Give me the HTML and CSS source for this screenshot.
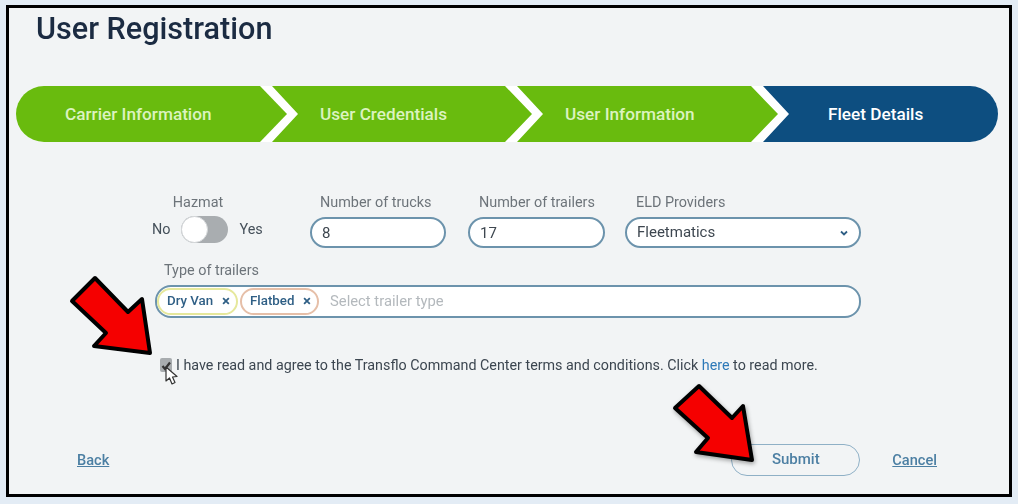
FILE: index.html
```html
<!DOCTYPE html>
<html lang="en">
<head>
  <meta charset="UTF-8" />
  <title>User Registration</title>
  <link rel="stylesheet" href="styles.css">
</head>
<body>
  <div class="frame">
    <h1 class="title">User Registration</h1>

    <!-- Steps -->
    <div class="steps">
      <div class="step step-first">Carrier Information</div>
      <div class="step step-second">User Credentials</div>
      <div class="step step-third">User Information</div>
      <div class="step step-last">Fleet Details</div>
    </div>

    <form class="form">
      <div class="form-row">
        <div class="hazmat">
          <span class="label">Hazmat</span>
          <div class="switch-row">
            <span>No</span>
            <span class="switch"><span class="knob"></span></span>
            <span>Yes</span>
          </div>
        </div>
        <div class="field field-trucks">
          <span class="label">Number of trucks</span>
          <div class="box">8</div>
        </div>
        <div class="field field-trailers">
          <span class="label">Number of trailers</span>
          <div class="box">17</div>
        </div>
        <div class="field field-eld">
          <span class="label">ELD Providers</span>
          <div class="box box-select">
            Fleetmatics
            <svg class="caret" width="8" height="6" viewBox="0 0 8 6"><path d="M1 1.5 L4 4.5 L7 1.5" fill="none" stroke="#2f5f85" stroke-width="1.8"/></svg>
          </div>
        </div>
      </div>

      <div class="trailer-type">
        <span class="label">Type of trailers</span>
        <div class="box box-chips">
          <span class="chip chip-yellow">Dry Van <b class="chip-x">&times;</b></span>
          <span class="chip chip-orange">Flatbed <b class="chip-x">&times;</b></span>
          <span class="placeholder">Select trailer type</span>
        </div>
      </div>

      <div class="terms">
        <span class="check">
          <svg width="12" height="12" viewBox="0 0 12 12"><path d="M2.5 6 L5 9 L10 2.5" fill="none" stroke="#333" stroke-width="2.2"/></svg>
        </span>
        <span>I have read and agree to the Transflo Command Center terms and conditions. Click <a class="here">here</a> to read more.</span>
      </div>

      <div class="actions">
        <a class="link">Back</a>
        <div class="actions-right">
          <button type="button" class="btn-submit">Submit</button>
          <a class="link">Cancel</a>
        </div>
      </div>
    </form>
  </div>

  <!-- Annotations on top of the screenshot -->
  <svg class="overlay" width="1018" height="504" viewBox="0 0 1018 504">
    <defs>
      <filter id="soft" x="-20%" y="-20%" width="140%" height="140%">
        <feDropShadow dx="1" dy="2" stdDeviation="2" flood-color="#000" flood-opacity="0.35"/>
      </filter>
    </defs>
    <polygon class="arrow" points="95,278 128,312 142,299 150,353 94,346 106,333 72,301"/>
    <polygon class="arrow" filter="url(#soft)" points="699,386 732,418 743,406 752,460 696,452 708,438 675,408"/>
    <path class="cursor" d="M166 367 L166 381 L169.500 378 L172 384 L175 382.500 L172.500 377 L177 376.500 Z"/>
  </svg>
</body>
</html>
```

FILE: styles.css
```css
/* Page */
html, body {
  margin: 0;
  padding: 0;
  height: 100%;
  overflow: hidden;
}
body {
  background: #e3ecf5;
  padding: 5px 6px 7px 6px;
  box-sizing: border-box;
  font-family: Roboto, "Liberation Sans", sans-serif;
  color: #3c4650;
}
.frame {
  height: 492px;
  box-sizing: border-box;
  border: 3px solid #000;
  background: #f2f4f5;
  padding: 0 7px;
}
.title {
  margin: 0 0 0 20px;
  padding-top: 2px;
  height: 78px;
  box-sizing: border-box;
  font-size: 30.6px;
  line-height: 38px;
  font-weight: 500;
  color: #1b2b42;
  filter: blur(0.4px);
}

/* Steps */
.steps {
  display: flex;
  width: 982px;
  height: 56px;
  background: #fff;
  border-radius: 28px;
}
.step {
  height: 56px;
  line-height: 56px;
  box-sizing: border-box;
  margin-left: -15px;
  padding-left: 48px;
  font-size: 17.2px;
  font-weight: 500;
  color: #dcf3c0;
  background: #69bb0e;
  clip-path: polygon(0 0, calc(100% - 27px) 0, 100% 50%, calc(100% - 27px) 100%, 0 100%, 26px 50%);
}
.step-first {
  width: 271px;
  margin-left: 0;
  padding-left: 49px;
  border-radius: 28px 0 0 28px;
  clip-path: polygon(0 0, calc(100% - 27px) 0, 100% 50%, calc(100% - 27px) 100%, 0 100%);
}
.step-second { width: 260px; }
.step-third { width: 261px; }
.step-last {
  width: 235px;
  padding-left: 65px;
  color: #fff;
  background: #0d4e80;
  border-radius: 0 28px 28px 0;
  clip-path: polygon(0 0, 100% 0, 100% 100%, 0 100%, 26px 50%);
}

/* Form */
.form {
  padding-top: 52px;
  filter: blur(0.4px);
}
.form-row {
  display: flex;
}
.label {
  display: block;
  font-size: 14.4px;
  line-height: 18px;
  color: #6d747a;
}
.hazmat {
  width: 158px;
  margin-left: 136px;
  text-align: left;
}
.hazmat .label {
  margin-left: 10px;
  text-align: center;
  width: 72px;
}
.switch-row {
  display: flex;
  align-items: center;
  gap: 11px;
  margin-top: 4px;
  font-size: 14.4px;
  line-height: 27px;
  color: #45505a;
}
.switch {
  display: block;
  width: 47px;
  height: 27px;
  border-radius: 14px;
  background: #a9adb0;
}
.knob {
  display: block;
  width: 27px;
  height: 27px;
  box-sizing: border-box;
  border-radius: 50%;
  background: #fff;
  border: 1px solid #d5d8da;
}
.field .label {
  margin-left: 10px;
}
.field-trailers .label,
.field-eld .label {
  margin-left: 11px;
}
.field-trucks { width: 136px; margin-right: 22px; }
.field-trailers { width: 137px; margin-right: 20px; }
.field-eld { width: 236px; }
.box {
  box-sizing: border-box;
  height: 31px;
  margin-top: 5px;
  padding-left: 10px;
  border: 2px solid #6c93ac;
  border-radius: 16px;
  background: #fff;
  font-size: 15px;
  line-height: 29px;
  color: #3e4750;
}
.box-select {
  display: flex;
  justify-content: space-between;
  align-items: center;
  padding-right: 11px;
}

/* Trailer types */
.trailer-type {
  margin: 14px 0 0 139px;
  width: 706px;
}
.trailer-type .label {
  margin-left: 9px;
}
.box-chips {
  display: flex;
  align-items: center;
  gap: 1px;
  height: 33px;
  margin-top: 5px;
  padding-left: 0;
}
.chip {
  box-sizing: border-box;
  height: 27px;
  border-radius: 14px;
  border: 2px solid #e6e89c;
  background: #fff;
  padding: 0 6px 0 8px;
  font-size: 13.3px;
  font-weight: 500;
  line-height: 22px;
  color: #2f5f85;
  white-space: nowrap;
  display: flex;
  justify-content: space-between;
  width: 81px;
}
.chip-yellow {
  margin-left: 0;
}
.chip-orange {
  width: 79px;
  margin-left: 1px;
  border-color: #e6bfa8;
}
.chip-x {
  font-size: 15px;
  font-weight: 700;
}
.placeholder {
  margin-left: 10px;
  font-size: 14.8px;
  color: #b4b9bd;
}

/* Terms */
.terms {
  display: flex;
  align-items: center;
  gap: 4px;
  margin: 38px 0 0 144px;
  font-size: 14.3px;
  line-height: 18px;
  color: #3c4650;
}
.check {
  display: block;
  width: 12px;
  height: 14px;
  border-radius: 2px;
  background: #a8acaf;
}
.here {
  color: #2d79b8;
}

/* Bottom links */
.actions {
  display: flex;
  justify-content: space-between;
  align-items: center;
  margin: 70px 0 0 61px;
  width: 860px;
}
.actions-right {
  display: flex;
  align-items: center;
  gap: 32px;
}
.link {
  font-size: 14.6px;
  font-weight: 500;
  color: #4c7fa3;
  text-decoration: underline;
}
.btn-submit {
  width: 129px;
  height: 32px;
  padding: 0 0 3px;
  border: 1.5px solid #8fb0c6;
  border-radius: 16px;
  background: transparent;
  font-family: inherit;
  font-size: 15px;
  font-weight: 500;
  color: #4c7fa3;
}

/* Annotations */
.overlay {
  position: absolute;
  top: 0;
  left: 0;
  pointer-events: none;
}
.arrow {
  fill: #f50000;
  stroke: #000;
  stroke-width: 4;
  stroke-linejoin: round;
}
.cursor {
  fill: #fff;
  stroke: #333;
  stroke-width: 1.2;
  stroke-linejoin: round;
}
```
